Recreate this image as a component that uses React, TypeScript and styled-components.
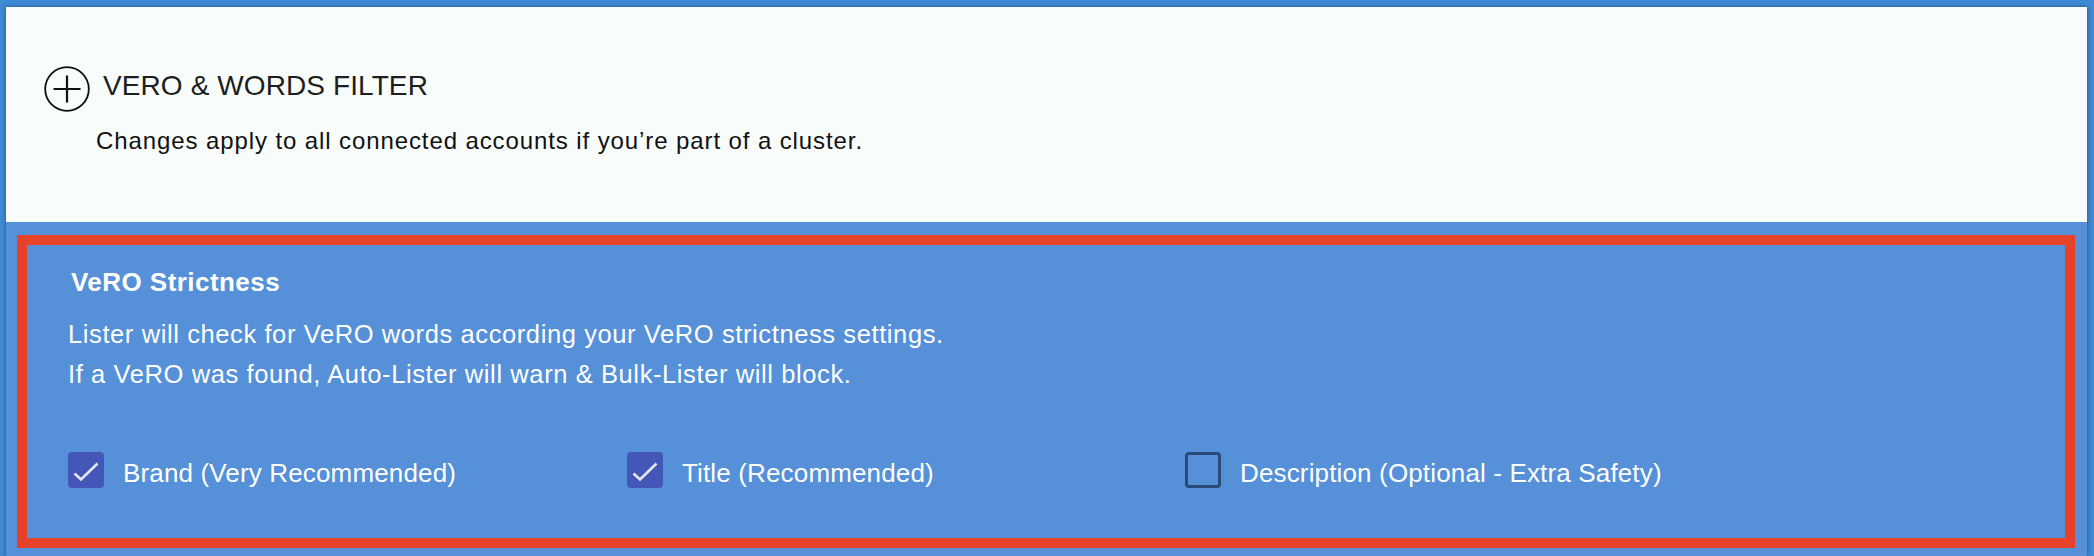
import styled, { createGlobalStyle } from "styled-components";

const GlobalStyle = createGlobalStyle`
  html, body {
    margin: 0;
    padding: 0;
    background: #3f8ad5;
    overflow: hidden;
  }
  body {
    font-family: "Liberation Sans", Arial, Helvetica, sans-serif;
  }
`

const Frame = styled.div`
  padding: 7px 7px 0 6px;
  height: 556px;
  box-sizing: border-box;
  background: #3f8ad5;
  overflow: hidden;
`

const Sheet = styled.div`
  height: 100%;
  display: flex;
  flex-direction: column;
  box-shadow: 0 0 4px rgba(0, 0, 0, 0.45);
`

const FilterCard = styled.section`
  background: #f8fcfb;
  padding: 59px 38px 0 38px;
  height: 215px;
  box-sizing: border-box;
`

const Header = styled.div`
  display: flex;
  align-items: center;
  gap: 13px;
  height: 45px;
`

const HeaderTitle = styled.h2`
  margin: 0 0 5px 0;
  font-size: 28px;
  line-height: 34px;
  font-weight: 400;
  color: #1e1e1e;
  letter-spacing: 0.1px;
`

const Note = styled.p`
  margin: 16px 0 0 52px;
  font-size: 24px;
  line-height: 28px;
  letter-spacing: 0.9px;
  color: #111;
`

const Panel = styled.section`
  flex: 1;
  background: #5590d8;
  padding: 13px 12px 0 11px;
`

const Highlight = styled.div`
  border: 10px solid #e8412a;
  padding: 22px 40px 47px 41px;
  color: #fff;
`

const PanelTitle = styled.h3`
  margin: 0 0 0 3px;
  font-size: 26px;
  line-height: 30px;
  font-weight: 700;
  letter-spacing: 0.45px;
`

const Lines = styled.p`
  margin: 17px 0 0 0;
  font-size: 25.5px;
  line-height: 40px;
  letter-spacing: 0.6px;
`

const Options = styled.div`
  display: grid;
  grid-template-columns: 559px 558px 1fr;
  margin-top: 58px;
`

const Option = styled.label`
  display: flex;
  align-items: flex-start;
  gap: 19px;
  cursor: pointer;
`

const Box = styled.span<{ $checked: boolean }>`
  width: 36px;
  height: 36px;
  box-sizing: border-box;
  border-radius: 4px;
  flex-shrink: 0;
  display: flex;
  align-items: center;
  justify-content: center;
  background: ${p => (p.$checked ? "#4457b8" : "transparent")};
  border: ${p => (p.$checked ? "none" : "3px solid #2a4a78")};
`

const OptionText = styled.span`
  font-size: 26px;
  line-height: 36px;
  margin-top: 3px;
  letter-spacing: 0.15px;
  color: #fff;
`

const PlusCircle = () => (
  <svg width="46" height="46" viewBox="0 0 46 46">
    <circle cx="23" cy="23" r="21.8" fill="none" stroke="#111" strokeWidth="1.8" />
    <path d="M23 9.5V36.5M9.5 23H36.5" stroke="#111" strokeWidth="2.2" />
  </svg>
)

const Check = () => (
  <svg width="36" height="36" viewBox="0 0 36 36">
    <path d="M6.5 21.5L13 27.5L29.5 11.5" fill="none" stroke="#e6e6f6" strokeWidth="2.6" />
  </svg>
)

const options = [
  { label: "Brand (Very Recommended)", checked: true },
  { label: "Title (Recommended)", checked: true },
  { label: "Description (Optional - Extra Safety)", checked: false },
]

export default function App() {
  return (
    <>
      <GlobalStyle />
      <Frame>
        <Sheet>
          <FilterCard>
            <Header>
              <PlusCircle />
              <HeaderTitle>VERO &amp; WORDS FILTER</HeaderTitle>
            </Header>
            <Note>Changes apply to all connected accounts if you’re part of a cluster.</Note>
          </FilterCard>
          <Panel>
            <Highlight>
              <PanelTitle>VeRO Strictness</PanelTitle>
              <Lines>
                Lister will check for VeRO words according your VeRO strictness settings.
                <br />
                If a VeRO was found, Auto-Lister will warn &amp; Bulk-Lister will block.
              </Lines>
              <Options>
                {options.map(o => (
                  <Option key={o.label}>
                    <Box $checked={o.checked}>{o.checked && <Check />}</Box>
                    <OptionText>{o.label}</OptionText>
                  </Option>
                ))}
              </Options>
            </Highlight>
          </Panel>
        </Sheet>
      </Frame>
    </>
  )
}
